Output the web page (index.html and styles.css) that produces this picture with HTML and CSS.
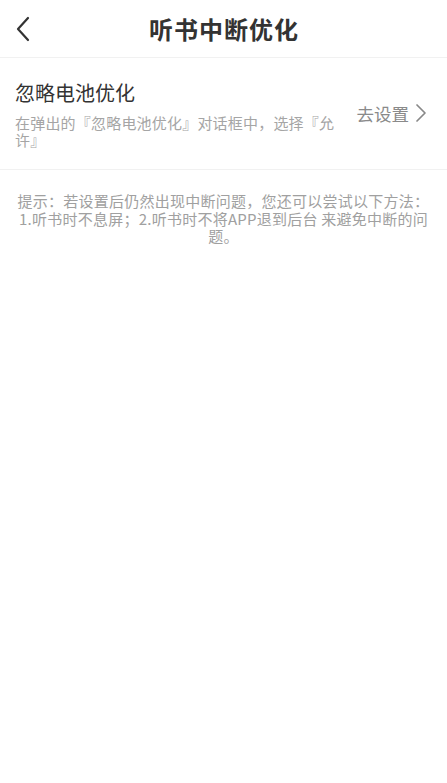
FILE: index.html
```html
<!DOCTYPE html>
<html lang="zh">
<head>
<meta charset="utf-8">
<link rel="stylesheet" href="styles.css">
</head>
<body>
<div class="page">
  <header class="nav">
    <span class="back">
      <svg width="16" height="26" viewBox="0 0 16 26"><path d="M13 2 L3 13 L13 24" fill="none" stroke="#333" stroke-width="2.2" stroke-linecap="round" stroke-linejoin="round"/></svg>
    </span>
    <h1 class="nav-title">听书中断优化</h1>
  </header>
  <section class="row">
    <div class="row-text">
      <div class="row-title">忽略电池优化</div>
      <div class="row-desc">在弹出的『忽略电池优化』对话框中，选择『允许』</div>
    </div>
    <div class="row-action">
      <span>去设置</span>
      <svg width="12" height="20" viewBox="0 0 12 20"><path d="M2 2 L10 10 L2 18" fill="none" stroke="#888" stroke-width="1.7" stroke-linecap="round" stroke-linejoin="round"/></svg>
    </div>
  </section>
  <p class="tip">提示：若设置后仍然出现中断问题，您还可以尝试以下方法：1.听书时不息屏；2.听书时不将APP退到后台 来避免中断的问题。</p>
</div>
</body>
</html>
```
FILE: styles.css
```css
html, body {
  margin: 0;
  padding: 0;
  background: #fff;
}
body {
  font-family: "Noto Sans CJK SC", "Noto Sans", sans-serif;
  color: #333;
}
.page {
  width: 447px;
}
.nav {
  height: 57px;
  border-bottom: 1px solid #f1f1f1;
  display: flex;
  align-items: center;
  justify-content: center;
  position: relative;
}
.back {
  position: absolute;
  left: 15px;
  top: 16px;
  display: flex;
}
.nav-title {
  margin: 0;
  font-size: 24px;
  font-weight: 700;
  letter-spacing: 1px;
  color: #333;
  padding-left: 1px;
}
.row {
  display: flex;
  align-items: center;
  padding: 22px 20px 21px 15px;
  border-bottom: 1px solid #f1f1f1;
  gap: 18px;
}
.row-text {
  flex: 1;
  min-width: 0;
}
.row-title {
  font-size: 20px;
  line-height: 26px;
  color: #333;
}
.row-desc {
  margin-top: 8px;
  font-size: 15px;
  letter-spacing: 0.2px;
  line-height: 17px;
  color: #a5a5a5;
}
.row-action {
  display: flex;
  align-items: center;
  gap: 6px;
  font-size: 17.5px;
  color: #8a8a8a;
  padding-bottom: 2px;
}
.tip {
  margin: 22px 0 0;
  padding: 0 14px;
  text-align: center;
  font-size: 15px;
  letter-spacing: 0.25px;
  line-height: 17.5px;
  color: #a0a0a0;
}
```
